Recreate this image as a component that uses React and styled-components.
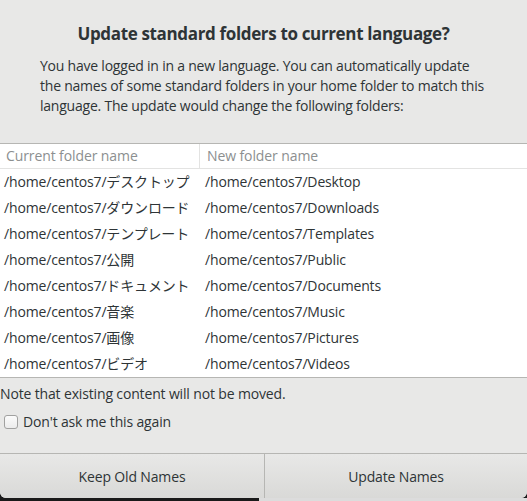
import React from "react";
import styled, { createGlobalStyle } from "styled-components";

const Global = createGlobalStyle`
  html, body {
    margin: 0;
    padding: 0;
    background: #1a1a1a;
  }
  body {
    font-family: "Open Sans", "Noto Sans CJK JP", sans-serif;
    color: #2e3436;
  }
`;

const Dialog = styled.div`
  width: 527px;
  height: 498px;
  background: #e8e8e7;
  display: flex;
  flex-direction: column;
  border-radius: 0 0 6px 6px;
  overflow: hidden;
`;

const Header = styled.div`
  padding: 21px 40px 0 40px;
  height: 143px;
  box-sizing: border-box;
`;

const Title = styled.h1`
  margin: 0 0 9px;
  font-size: 17px;
  font-weight: bold;
  text-align: center;
  line-height: 26px;
  letter-spacing: -0.35px;
  white-space: nowrap;
`;

const Message = styled.p`
  margin: 0;
  font-size: 14px;
  line-height: 20px;
  letter-spacing: -0.22px;
  white-space: nowrap;
`;

const Table = styled.div`
  background: #fff;
  border-top: 1px solid #b6b6b3;
  border-bottom: 1px solid #b6b6b3;
`;

const HeadRow = styled.div`
  display: grid;
  grid-template-columns: 199px 1fr;
  height: 24px;
  border-bottom: 1px solid #e3e3e2;
`;

const HeadCell = styled.div`
  font-size: 14px;
  color: #8c8f90;
  line-height: 24px;
  padding-left: ${(p) => (p.first ? "6px" : "7px")};
  border-left: ${(p) => (p.first ? "none" : "1px solid #e3e3e2")};
  letter-spacing: -0.1px;
`;

const Row = styled.div`
  display: grid;
  grid-template-columns: 200px 1fr;
  height: 26px;
`;

const Cell = styled.div`
  font-size: 14px;
  line-height: 26px;
  padding-left: ${(p) => (p.first ? "4px" : "5px")};
  white-space: nowrap;
  color: #2e3436;
  letter-spacing: -0.15px;
`;

const Note = styled.div`
  font-size: 14px;
  line-height: 20px;
  padding-top: 6px;
  letter-spacing: -0.15px;
`;

const CheckRow = styled.label`
  display: flex;
  align-items: center;
  gap: 5px;
  padding: 8px 0 0 4px;
  font-size: 14px;
  letter-spacing: -0.15px;
`;

const Box = styled.span`
  width: 12px;
  height: 12px;
  border: 1px solid #a1a1a0;
  border-radius: 3px;
  background: linear-gradient(#fbfbfb, #ececec);
  display: inline-block;
`;

const Spacer = styled.div`
  flex: 1;
`;

const Buttons = styled.div`
  display: grid;
  grid-template-columns: 264px 1fr;
  height: 44px;
  border-top: 1px solid #b6b6b3;
`;

const Button = styled.button`
  font-family: inherit;
  font-size: 14px;
  color: #2e3436;
  border: none;
  border-left: ${(p) => (p.split ? "1px solid #b6b6b3" : "none")};
  background: linear-gradient(#e8e8e7, #d9d9d7);
  padding: 0;
  letter-spacing: -0.15px;
`;

const Bottom = styled.div`
  display: grid;
  grid-template-columns: 259px 1fr;
  height: 3px;
`;

const Strip = styled.div`
  background: ${(p) => p.color};
`;

const rows = [
  ["/home/centos7/デスクトップ", "/home/centos7/Desktop"],
  ["/home/centos7/ダウンロード", "/home/centos7/Downloads"],
  ["/home/centos7/テンプレート", "/home/centos7/Templates"],
  ["/home/centos7/公開", "/home/centos7/Public"],
  ["/home/centos7/ドキュメント", "/home/centos7/Documents"],
  ["/home/centos7/音楽", "/home/centos7/Music"],
  ["/home/centos7/画像", "/home/centos7/Pictures"],
  ["/home/centos7/ビデオ", "/home/centos7/Videos"],
];

export default function App() {
  return (
    <>
      <Global />
      <Dialog>
        <Header>
          <Title>Update standard folders to current language?</Title>
          <Message>
            You have logged in in a new language. You can automatically update
            <br />
            the names of some standard folders in your home folder to match this
            <br />
            language. The update would change the following folders:
          </Message>
        </Header>
        <Table>
          <HeadRow>
            <HeadCell first>Current folder name</HeadCell>
            <HeadCell>New folder name</HeadCell>
          </HeadRow>
          {rows.map((r, i) => (
            <Row key={i}>
              <Cell first>{r[0]}</Cell>
              <Cell>{r[1]}</Cell>
            </Row>
          ))}
        </Table>
        <Note>Note that existing content will not be moved.</Note>
        <CheckRow>
          <Box />
          Don't ask me this again
        </CheckRow>
        <Spacer />
        <Buttons>
          <Button>Keep Old Names</Button>
          <Button split>Update Names</Button>
        </Buttons>
      </Dialog>
      <Bottom>
        <Strip color="#1a1a1a" />
        <Strip color="#dcdcdc" />
      </Bottom>
    </>
  );
}
